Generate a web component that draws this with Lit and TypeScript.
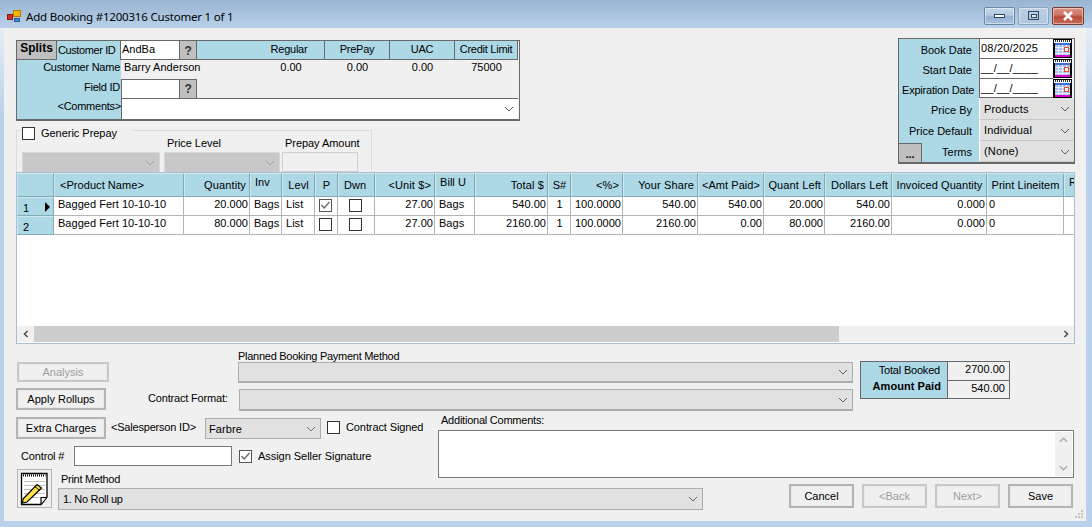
import { LitElement, html, css, svg } from "lit";
import { customElement } from "lit/decorators.js";

const chev = (cls = "") => html`<svg class="chev ${cls}" width="10" height="6" viewBox="0 0 10 6"><path d="M1 1 L5 5 L9 1" fill="none" stroke="currentColor" stroke-width="1"/></svg>`;

const cal = svg`<svg class="calsvg" width="19" height="19" viewBox="0 0 19 19" shape-rendering="crispEdges">
<rect x="0" y="0" width="19" height="19" fill="#000"/>
<rect x="1" y="1" width="17" height="3" fill="#fff"/>
<path d="M2.500 1v2M4.500 1v2M6.500 1v2M8.500 1v2M10.500 1v2M12.500 1v2M14.500 1v2M16.500 1v2" stroke="#333" stroke-width="1"/>
<rect x="2" y="4" width="15" height="2" fill="#3f6fd0"/>
<rect x="2" y="6" width="15" height="10" fill="#a9bdea"/>
<path d="M5.500 6v10M9.500 6v10M13.500 6v10M2 8.500h15M2 11.500h15M2 14.500h15" stroke="#e8ecff" stroke-width="1"/>
<rect x="11" y="8" width="5" height="5" fill="#f04820"/><rect x="12" y="9" width="3" height="3" fill="#fff"/>
<rect x="2" y="16" width="15" height="2" fill="#e000d0"/>
</svg>`;

const head = ["", "<Product Name>", "Quantity", "Inv", "Levl", "P", "Dwn", "<Unit $>", "Bill U", "Total $", "S#", "<%>", "Your Share", "<Amt Paid>", "Quant Left", "Dollars Left", "Invoiced Quantity", "Print Lineitem", "R"];
const headAlign = ["", "lf", "r", "l", "c", "c", "dw", "r", "l", "r", "c", "r", "r", "c", "r", "r", "c", "c", "l"];

type Row = { n: string; p: boolean; q: string; t: string; sh: string; paid: string; ql: string; dl: string };
const rows: Row[] = [
  { n: "1", p: true, q: "20.000", t: "540.00", sh: "540.00", paid: "540.00", ql: "20.000", dl: "540.00" },
  { n: "2", p: false, q: "80.000", t: "2160.00", sh: "2160.00", paid: "0.00", ql: "80.000", dl: "2160.00" },
];

const check = (on: boolean, cls = "") => html`<span class="cb ${on ? "on" : ""} ${cls}">${on ? html`<svg width="11" height="11" viewBox="0 0 11 11"><path d="M1.500 5 L4.200 8 L9.500 2" fill="none" stroke="#666" stroke-width="1.300"/></svg>` : ""}</span>`;

@customElement("app-root")
export class AppRoot extends LitElement {
  static styles = css`
    :host { display: block; width: 1092px; height: 527px; overflow: hidden; background: linear-gradient(#e6eef6 0, #e6eef6 28px, #b9d1ea 115px); font: 11px/13px "Liberation Sans", Arial, sans-serif; color: #000; }
    * { box-sizing: border-box; }
    .title { height: 28px; display: flex; align-items: flex-start; background: linear-gradient(#99b4d1, #b9d1ea); padding: 7px 8px 0 7px; }
    .app-ico { margin-top: 3px; }
    .title-text { margin-left: 5px; margin-top: 2px; font: 11.500px/16px "Noto Sans", sans-serif; color: #000; flex: 1; letter-spacing: -.2px; }
    .wbtns { display: flex; gap: 3px; }
    .wb { width: 31px; height: 18px; border: 1px solid #6d86a3; border-radius: 2px; display: flex; align-items: center; justify-content: center; background: linear-gradient(#c6d7ea 0, #b2c9e2 45%, #94b1d2 55%, #a9c3df 100%); box-shadow: inset 0 0 0 1px rgba(255,255,255,.45); }
    .wb.res { background: linear-gradient(#bccfe4, #aec6e0); border-color: #8ba3bd; }
    .wb.close { width: 32px; border-color: #7a3b30; background: linear-gradient(#dd9485 0, #cc7262 45%, #b54a38 55%, #c96a55 100%); }
    .body { height: 493px; margin: 0 6px 0 4px; background: #f0f0f0; position: relative; display: flex; flex-direction: column; }
    .top { height: 144px; display: flex; justify-content: space-between; padding: 0 11px 0 12px; }

    .cust { width: 504px; height: 81px; margin-top: 12px; border: 1px solid #696969; border-bottom-width: 2px; display: grid; grid-template-columns: 104px 58px 18px 128px 65px 65px 63px; grid-template-rows: 19px 19px 20px 20px; background: #f0f0f0; letter-spacing: -.25px; }
    .cust .c1 { display: flex; align-items: stretch; background: #add8e6; border-right: 1px solid #696969; }
    .splits { width: 40px; background: #c0c0c0; border-right: 1px solid #696969; border-bottom: 1px solid #696969; font-weight: 700; font-size: 12px; line-height: 15px; text-align: center; letter-spacing: 0; }
    .cid { padding: 3px 0 0 1px; white-space: nowrap; letter-spacing: -.4px; }
    .inp { background: #fff; padding: 2px 0 0 1px; border-bottom: 1px solid #696969; letter-spacing: 0; }
    .q { background: #c0c0c0; border: 1px solid #696969; border-width: 0 1px 1px 1px; text-align: center; font-weight: 700; font-size: 12px; line-height: 20px; color: #333; }
    .hc { background: #add8e6; border-bottom: 1px solid #696969; text-align: center; padding-top: 2px; border-right: 1px solid #696969; white-space: nowrap; }
    .hc:last-child { border-right: 0; padding-left: 2px; }
    .hc.reg { padding-left: 57px; }
    .lab { background: #add8e6; text-align: right; padding: 1px 1px 0 0; }
    .lab.fld { padding-top: 2px; }
    .val { padding: 1px 0 0 3px; letter-spacing: .05px; white-space: nowrap; }
    .num { text-align: center; padding-top: 1px; letter-spacing: 0; }
    .num.reg { padding-left: 60px; }
    .span3 { grid-column: span 4; border-bottom: 1px solid #696969; }
    .cmt-lab { background: #add8e6; text-align: right; padding-top: 1px; white-space: nowrap; }
    .cmt { grid-column: 2 / -1; background: #fff; border-left: 1px solid #696969; position: relative; display: flex; justify-content: flex-end; align-items: center; padding-right: 4px; color: #555; }
    .finp { background: #fff; border-bottom: 1px solid #696969; border-top: 1px solid #696969; border-left: 1px solid #696969; margin-left: 0; }
    .q2 { border-top: 1px solid #696969; line-height: 18px; }

    .leftcol { display: flex; flex-direction: column; }
    .group { width: 356px; height: 43px; margin-top: 9px; border: 1px solid #dcdcdc; border-bottom: 0; display: grid; grid-template-columns: 142px 118px auto; padding: 6px 0 0 5px; position: relative; }
    .legend { position: absolute; left: 5px; top: -5px; padding-right: 6px; background: #f0f0f0; display: flex; gap: 6px; align-items: center; width: 111px; height: 14px; letter-spacing: -.03px; }
    .group .cell { display: flex; flex-direction: column; justify-content: flex-end; }
    .glab { height: 13px; margin-bottom: 2px; letter-spacing: -.05px; padding-left: 3px; white-space: nowrap; }
    .dis { height: 22px; background: #c8c8c8; display: flex; justify-content: flex-end; align-items: center; padding-right: 4px; color: #a0a0a0; border: 1px solid #d8d8d8; }
    .dis.a { width: 138px; }
    .dis.b { width: 116px; }
    .dis.c { width: 76px; height: 20px; background: #f0f0f0; border: 1px solid #cfcfcf; margin: 0 0 2px 0; }

    .dates { width: 177px; height: 126px; margin-top: 10px; border: 1px solid #696969; border-bottom-width: 2px; display: grid; grid-template-columns: 80px 74px 21px; grid-template-rows: 20px 20px 19px 22px 21px 21px; background: #add8e6; position: relative; }
    .dl { text-align: right; padding: 5px 7px 0 0; white-space: nowrap; }
    .dl.tight { padding-right: 0; padding-left: 3px; text-align: left; letter-spacing: -.2px; }
    .dl.pb { padding-top: 6px; }
    .di { background: #fff; padding: 3px 0 0 1px; border-bottom: 1px solid #696969; letter-spacing: .2px; border-left: 1px solid #696969; }
    .cali { background: #f4f4f4; display: flex; justify-content: flex-start; }
    .calsvg { display: block; }
    .ds { grid-column: 2 / 4; background: #e1e1e1; border-left: 1px solid #fff; border-bottom: 1px solid #c8c8c8; display: flex; justify-content: space-between; align-items: center; padding: 1px 4px 0 4px; color: #000; letter-spacing: .15px; }
    .ds svg { color: #606060; }
    .dots { position: absolute; left: 0; bottom: 0; width: 23px; height: 19px; background: #c0c0c0; border-top: 1px solid #696969; border-right: 1px solid #696969; font-weight: 700; text-align: center; line-height: 20px; }

    .grid { margin: 0 11px 0 12px; height: 172px; border: 1px solid #a9bdd0; background: #fff; position: relative; overflow: hidden; display: flex; flex-direction: column; }
    .gr { display: grid; grid-template-columns: 37px 130px 66px 32px 33px 23px 37px 60px 40px 73px 23px 52px 75px 66px 61px 67px 95px 77px 11px; width: 1058px; flex: none; }
    .gh { height: 24px; }
    .gh > div { background: #add8e6; border: 1px solid; border-color: #d0e9f1 #84a9b6 #84a9b6 #d0e9f1; padding-top: 5px; white-space: nowrap; overflow: hidden; letter-spacing: .05px; }
    .gh .r { text-align: right; padding-right: 3px; letter-spacing: .12px; }
    .gh .c { text-align: center; }
    .gh .l { padding-left: 4px; padding-top: 2px; }
    .gh .lf { padding-left: 5px; }
    .gh .dw { text-align: center; padding-right: 3px; }
    .gb { height: 19px; }
    .gb > div { border-right: 1px solid #b4b4b4; border-bottom: 1px solid #b4b4b4; padding: 1px 1px 0 2px; white-space: nowrap; overflow: hidden; letter-spacing: .03px; }
    .gb > div.rh { background: #add8e6; border: 1px solid; border-color: #d0e9f1 #84a9b6 #84a9b6 #d0e9f1; padding: 4px 0 0 5px; position: relative; }
    .tri { position: absolute; right: 3px; top: 4px; width: 0; height: 0; border-left: 5px solid #000; border-top: 5px solid transparent; border-bottom: 5px solid transparent; }
    .gb .r { text-align: right; }
    .gb .m { text-align: center; }
    .gb > div.pd { padding-left: 4px; }
    .gb > div.ck { display: flex; justify-content: center; padding: 2px 1px 0 0; }
    .spacer { flex: 1; }
    .hs { height: 16px; background: #f0f0f0; display: flex; flex: none; margin-bottom: 1px; }
    .ar { width: 17px; display: flex; align-items: center; justify-content: center; }
    .thumb { width: 805px; background: #cdcdcd; }
    .hs .rest { flex: 1; }

    .cb { width: 13px; height: 13px; background: #fff; border: 1px solid #333; display: inline-flex; align-items: center; justify-content: center; flex: none; }
    .cb.on { border-color: #555; }

    .b1 { margin: 6px 0 0 12px; height: 61px; display: flex; }
    .b1l { width: 222px; }
    .btn { display: flex; align-items: center; justify-content: center; border: 2px solid #b4b4b4; background: #f0f0f0; box-shadow: inset 0 0 0 1px #e9e9e9; white-space: nowrap; }
    .btn.off { color: #9d9d9d; border-color: #c8c8c8; }
    .an { width: 92px; height: 20px; margin: 12px 0 0 1px; }
    .ar-row { display: flex; margin-top: 6px; align-items: center; }
    .ap { width: 90px; height: 22px; }
    .cf { margin-left: 42px; letter-spacing: -.18px; padding-bottom: 1px; white-space: nowrap; }
    .b1m { width: 615px; }
    .pl { height: 12px; line-height: 12px; margin-bottom: 0; letter-spacing: -.27px; }
    .sel { display: flex; justify-content: flex-end; align-items: center; background: #e1e1e1; border: 1px solid #adadad; border-bottom-width: 2px; padding-right: 4px; color: #606060; }
    .s1 { height: 21px; }
    .s2 { height: 22px; margin: 6px 0 0 1px; }
    .tot { margin: 11px 0 0 7px; width: 150px; height: 38px; border: 1px solid #696969; display: grid; grid-template-columns: 86px 1fr; grid-template-rows: 18px 18px; background: #add8e6; }
    .tl { text-align: right; padding: 2px 7px 0 0; letter-spacing: -.2px; white-space: nowrap; }
    .tl.bold { font-weight: 700; padding: 0 6px 0 0; letter-spacing: .05px; }
    .tv { background: #f0f0f0; border-left: 1px solid #696969; text-align: right; padding: 1px 4px 0 0; letter-spacing: .02px; }
    .tv.b { border-top: 1px solid #696969; padding-top: 1px; }

    .b2 { margin: 3px 0 0 12px; display: grid; grid-template-columns: 42px 380px 265px 86px 285px; grid-template-rows: 32px 23px 9px 7px 3px 22px; }
    .extra { grid-column: 1 / 3; grid-row: 1; display: flex; align-items: flex-start; padding-top: 3px; }
    .ex { width: 90px; height: 22px; }
    .sid { margin-left: 5px; margin-top: 4px; width: 94px; white-space: nowrap; letter-spacing: -.2px; }
    .fs { width: 116px; height: 21px; margin-top: 1px; background: #e1e1e1; border: 1px solid #adadad; display: flex; justify-content: space-between; align-items: center; padding: 1px 4px 0 3px; letter-spacing: .1px; }
    .fs svg { color: #707070; }
    .fc { margin: 4px 0 0 6px; display: flex; gap: 6px; align-items: flex-start; letter-spacing: -.1px; white-space: nowrap; }
    .ctrl { grid-column: 1 / 3; grid-row: 2; display: flex; align-items: flex-start; }
    .ctl { margin: 4px 0 0 5px; width: 53px; letter-spacing: -.15px; white-space: nowrap; }
    .tin { width: 158px; height: 20px; background: #fff; border: 1px solid #7a7a7a; }
    .ctrl .fc2 { margin: 4px 0 0 7px; display: flex; gap: 6px; letter-spacing: -.04px; white-space: nowrap; }
    .ac { grid-column: 3 / 6; grid-row: 1 / 4; display: flex; flex-direction: column; }
    .acl { height: 16px; padding-left: 3px; letter-spacing: -.23px; }
    .ta { height: 48px; width: 636px; background: #fff; border: 1px solid #7a7a7a; position: relative; display: flex; justify-content: flex-end; }
    .tasb { width: 17px; background: #f0f0f0; margin: 1px; display: flex; flex-direction: column; justify-content: space-between; align-items: center; padding: 5px 0; color: #a9a9a9; }
    .nb { grid-column: 1; grid-row: 3 / 7; width: 35px; height: 39px; margin-left: 1px; border: 1px solid #b4b4b4; background: #f0f0f0; padding: 1px 1px 0 2px; }
    .pm { grid-column: 2; grid-row: 3 / 6; padding: 4px 0 0 3px; letter-spacing: -.28px; white-space: nowrap; }
    .pms { grid-column: 2 / 4; grid-row: 6; background: #e1e1e1; border: 1px solid #adadad; display: flex; justify-content: space-between; align-items: center; padding: 0 4px; letter-spacing: -.3px; }
    .pms svg { color: #606060; }
    .acts { grid-column: 5; grid-row: 5 / 7; display: flex; gap: 8px; height: 24px; margin-top: -1px; }
    .act { width: 65px; height: 24px; letter-spacing: 0; }
    .grip { position: absolute; right: 2px; bottom: 2px; }
  `;

  render() {
    return html`
      <div class="title">
        <svg class="app-ico" width="14" height="12" viewBox="0 0 14 12" shape-rendering="crispEdges">
          <rect x="6" y="0" width="7" height="6" fill="#f4b400" stroke="#b87a00" stroke-width="1"/>
          <rect x="0" y="4" width="5" height="5" fill="#d0302a" stroke="#8a1a10" stroke-width="1"/>
          <rect x="7" y="8" width="5" height="3" fill="#4a84d8" stroke="#2a5aa0" stroke-width="1"/>
        </svg>
        <div class="title-text">Add Booking #1200316 Customer 1 of 1</div>
        <div class="wbtns">
          <div class="wb"><svg width="12" height="6" shape-rendering="crispEdges"><rect x=".5" y="1.500" width="10" height="3" fill="#fff" stroke="#33475f"/></svg></div>
          <div class="wb res"><svg width="11" height="10" shape-rendering="crispEdges"><rect x=".5" y=".5" width="10" height="8" fill="none" stroke="#33475f"/><rect x="3" y="3" width="5" height="3" fill="#dfe8f2" stroke="#33475f" stroke-width="1"/></svg></div>
          <div class="wb close"><svg width="12" height="10" viewBox="0 0 12 10"><path d="M2 1 L10 9 M10 1 L2 9" stroke="#fff" stroke-width="2.600"/></svg></div>
        </div>
      </div>
      <div class="body">
        <div class="top">
          <div class="leftcol">
            <div class="cust">
              <div class="c1"><div class="splits">Splits</div><div class="cid">Customer ID</div></div>
              <div class="inp">AndBa</div>
              <div class="q">?</div>
              <div class="hc reg">Regular</div><div class="hc">PrePay</div><div class="hc">UAC</div><div class="hc">Credit Limit</div>

              <div class="lab">Customer Name</div>
              <div class="val" style="grid-column: span 2">Barry Anderson</div>
              <div class="num reg">0.00</div><div class="num">0.00</div><div class="num">0.00</div><div class="num">75000</div>

              <div class="lab fld">Field ID</div>
              <div class="finp"></div>
              <div class="q q2">?</div>
              <div class="span3"></div>

              <div class="cmt-lab">&lt;Comments&gt;</div>
              <div class="cmt">${chev()}</div>
            </div>
            <div class="group">
              <div class="legend">${check(false)}<span>Generic Prepay</span></div>
              <div class="cell"><div class="dis a">${chev()}</div></div>
              <div class="cell"><div class="glab">Price Level</div><div class="dis b">${chev()}</div></div>
              <div class="cell"><div class="glab">Prepay Amount</div><div class="dis c"></div></div>
            </div>
          </div>
          <div class="dates">
            <div class="dl">Book Date</div><div class="di">08/20/2025</div><div class="cali">${cal}</div>
            <div class="dl">Start Date</div><div class="di">__/__/____</div><div class="cali">${cal}</div>
            <div class="dl tight">Expiration Date</div><div class="di">__/__/____</div><div class="cali">${cal}</div>
            <div class="dl pb">Price By</div><div class="ds"><span>Products</span>${chev()}</div>
            <div class="dl">Price Default</div><div class="ds"><span>Individual</span>${chev()}</div>
            <div class="dl">Terms</div><div class="ds"><span>(None)</span>${chev()}</div>
            <div class="dots">...</div>
          </div>
        </div>

        <div class="grid">
          <div class="gr gh">${head.map((h, i) => html`<div class=${headAlign[i]}>${h}</div>`)}</div>
          ${rows.map((r) => html`
            <div class="gr gb">
              <div class="rh">${r.n}${r.n === "1" ? html`<span class="tri"></span>` : ""}</div>
              <div class="pd">Bagged Fert 10-10-10</div>
              <div class="r">${r.q}</div>
              <div class="pd">Bags</div>
              <div class="pd">List</div>
              <div class="ck">${check(r.p)}</div>
              <div class="ck">${check(false)}</div>
              <div class="r">27.00</div>
              <div class="pd">Bags</div>
              <div class="r">${r.t}</div>
              <div class="m">1</div>
              <div class="r">100.0000</div>
              <div class="r">${r.sh}</div>
              <div class="r">${r.paid}</div>
              <div class="r">${r.ql}</div>
              <div class="r">${r.dl}</div>
              <div class="r">0.000</div>
              <div>0</div>
              <div></div>
            </div>`)}
          <div class="spacer"></div>
          <div class="hs">
            <div class="ar"><svg width="8" height="8" viewBox="0 0 8 8"><path d="M5.500 1 L2.500 4 L5.500 7" fill="none" stroke="#505050" stroke-width="1.600"/></svg></div>
            <div class="thumb"></div><div class="rest"></div>
            <div class="ar"><svg width="8" height="8" viewBox="0 0 8 8"><path d="M2.500 1 L5.500 4 L2.500 7" fill="none" stroke="#505050" stroke-width="1.600"/></svg></div>
          </div>
        </div>

        <div class="b1">
          <div class="b1l">
            <div class="btn off an">Analysis</div>
            <div class="ar-row"><div class="btn ap">Apply Rollups</div><div class="cf">Contract Format:</div></div>
          </div>
          <div class="b1m">
            <div class="pl">Planned Booking Payment Method</div>
            <div class="sel s1">${chev()}</div>
            <div class="sel s2">${chev()}</div>
          </div>
          <div class="tot">
            <div class="tl">Total Booked</div><div class="tv">2700.00</div>
            <div class="tl bold">Amount Paid</div><div class="tv b">540.00</div>
          </div>
        </div>

        <div class="b2">
          <div class="extra">
            <div class="btn ex">Extra Charges</div>
            <div class="sid">&lt;Salesperson ID&gt;</div>
            <div class="fs"><span>Farbre</span>${chev()}</div>
            <div class="fc">${check(false)}<span>Contract Signed</span></div>
          </div>
          <div class="ctrl">
            <div class="ctl">Control #</div>
            <div class="tin"></div>
            <div class="fc2">${check(true)}<span>Assign Seller Signature</span></div>
          </div>
          <div class="ac">
            <div class="acl">Additional Comments:</div>
            <div class="ta"><div class="tasb">
              <svg width="9" height="6" viewBox="0 0 10 6"><path d="M1 5 L5 1 L9 5" fill="none" stroke="currentColor" stroke-width="1.500"/></svg>
              <svg width="9" height="6" viewBox="0 0 10 6"><path d="M1 1 L5 5 L9 1" fill="none" stroke="currentColor" stroke-width="1.500"/></svg>
            </div></div>
          </div>
          <div class="nb">
            <svg width="28" height="35" viewBox="0 0 28 35" shape-rendering="geometricPrecision">
              <path d="M1.500 2.500 H27 V26 L21 33.500 H1.500 Z" fill="#fff" stroke="#000" stroke-width="1.300"/>
              <path d="M3 4.500 H25.500" stroke="#000" stroke-width="2" stroke-dasharray="1 1"/>
              <path d="M4 10.500H25 M4 14.500H25 M4 18.500H25 M4 22.500H25 M4 26.500H19" stroke="#c0c0c0"/>
              <path d="M21 33.500 V26.500 H27" fill="#eee" stroke="#000" stroke-width="1.200"/>
              <path d="M21.500 33 L26.500 27" stroke="#000"/>
              <path d="M3 28 L17 13.500 L21.500 17 L7 31 L2.500 32 Z" fill="#ffe340" stroke="#000" stroke-width="1.200"/>
              <path d="M15 15.500 L19.500 19.500" stroke="#000"/>
            </svg>
          </div>
          <div class="pm">Print Method</div>
          <div class="pms"><span>1. No Roll up</span>${chev()}</div>
          <div class="acts">
            <div class="btn act">Cancel</div>
            <div class="btn act off">&lt;Back</div>
            <div class="btn act off">Next&gt;</div>
            <div class="btn act">Save</div>
          </div>
        </div>
        <svg class="grip" width="10" height="10" viewBox="0 0 10 10" shape-rendering="crispEdges"><path d="M7 1h2v2H7zM4 4h2v2H4zM7 4h2v2H7zM1 7h2v2H1zM4 7h2v2H4zM7 7h2v2H7z" fill="#c4c4c4"/></svg>
      </div>
    `;
  }
}
